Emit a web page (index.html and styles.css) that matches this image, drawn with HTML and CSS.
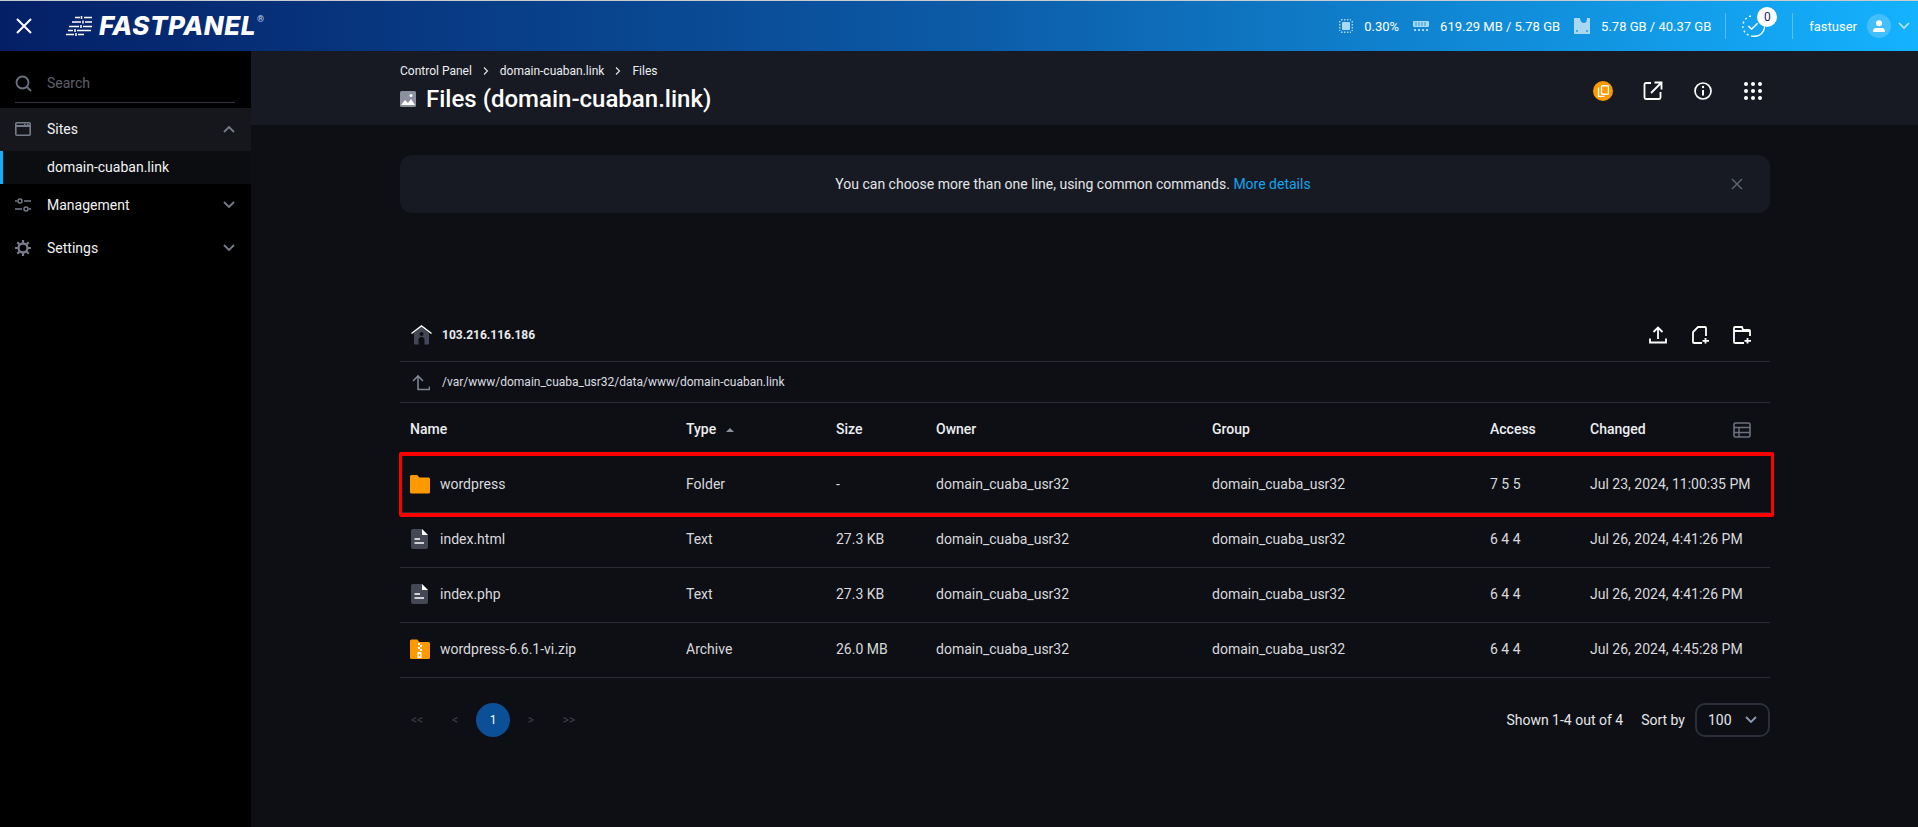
FILE: index.html
```html
<!DOCTYPE html>
<html lang="en">
<head>
    <meta charset="UTF-8">
    <meta name="viewport" content="width=device-width, initial-scale=1.0">
    <title>Files - FASTPANEL</title>
    <link rel="stylesheet" href="styles.css">
</head>
<body>
    <header class="topbar">
        <div class="topbar-left">
            <svg class="close-icon" width="16" height="16" viewBox="0 0 16 16"><path d="M1 1l14 14M15 1L1 15" stroke="#fff" stroke-width="2" fill="none"/></svg>
            <div class="logo">
                <svg width="27" height="20" viewBox="0 0 27 20"><path d="M9 1.500h5M18 1.500h8M6 6h9M19 6h7M3 10.500h10M17 10.500h9M2 14.500h5M11 14.500h14M0 18.500h8M12 18.500h6" stroke="#fff" stroke-width="1.500" fill="none"/><path d="M15.500 0v3M17 4.500v3M15 9v3M9 13v3M10 17v3" stroke="#fff" stroke-width="1.500"/></svg>
                <span class="logo-text">FASTPANEL</span><span class="logo-mark">®</span>
            </div>
        </div>
        <div class="topbar-right">
            <div class="stat">
                <svg width="14" height="14" viewBox="0 0 14 14"><rect x="3" y="3" width="8" height="8" rx="1" fill="#a9d8f5"/><path d="M0.700 2v10M13.300 2v10M2 0.700h10M2 13.300h10" stroke="#a9d8f5" stroke-width="1.400" stroke-dasharray="1.500 1.500" fill="none"/></svg>
                <span>0.30%</span>
            </div>
            <div class="stat">
                <svg width="16" height="14" viewBox="0 0 16 14"><rect x="0" y="2" width="16" height="6" rx="1" fill="#a9d8f5"/><path d="M3 3v4M6 3v4M9 3v4M12 3v4" stroke="#2a9ae0"/><path d="M1 11h14" stroke="#a9d8f5" stroke-width="2" stroke-dasharray="2 2"/></svg>
                <span>619.29 MB / 5.78 GB</span>
            </div>
            <div class="stat">
                <svg width="16" height="16" viewBox="0 0 16 16"><path d="M0 0h6c0 3 2 5 4 5s3-2 3-5h3v16H0z" fill="#a9d8f5"/><circle cx="3" cy="13" r="1" fill="#2a9ae0"/><circle cx="13" cy="13" r="1" fill="#2a9ae0"/></svg>
                <span>5.78 GB / 40.37 GB</span>
            </div>
            <div class="divider"></div>
            <div class="tasks">
                <svg width="24" height="26" viewBox="0 0 26 28"><path d="M22 6a11 11 0 0 1-9 19" stroke="#fff" stroke-width="1.600" fill="none"/><path d="M13 25A11 11 0 0 1 13 3" stroke="#fff" stroke-width="1.600" stroke-dasharray="2 3" fill="none"/><path d="M8 14l3.500 3.500L18 11" stroke="#fff" stroke-width="1.600" fill="none"/></svg>
                <span class="task-badge">0</span>
            </div>
            <div class="divider"></div>
            <div class="user">
                <span>fastuser</span>
                <span class="avatar">
                    <svg width="12" height="12" viewBox="0 0 12 12"><circle cx="6" cy="3.200" r="3" fill="#fff"/><path d="M0 12c0-2.500 1-4 3-4h6c2 0 3 1.500 3 4z" fill="#fff"/></svg>
                </span>
                <svg width="12" height="8" viewBox="0 0 12 8"><path d="M1 1l5 5 5-5" stroke="#bfe4fb" stroke-width="1.600" fill="none"/></svg>
            </div>
        </div>
    </header>

    <div class="layout">
        <aside class="sidebar">
            <div class="search-box">
                <svg width="17" height="17" viewBox="0 0 17 17"><circle cx="7.500" cy="7.500" r="6" stroke="#6c7280" stroke-width="1.800" fill="none"/><path d="M12 12l4 4" stroke="#6c7280" stroke-width="1.800"/></svg>
                <span class="search-text">Search</span>
            </div>
            <div class="nav-item nav-open">
                <svg width="16" height="14" viewBox="0 0 16 14"><rect x="0.800" y="0.800" width="14.400" height="12.400" rx="1" stroke="#767c8a" stroke-width="1.600" fill="none"/><path d="M1 4h14" stroke="#767c8a" stroke-width="2"/><path d="M9 2.500h1.500M12 2.500h1.500" stroke="#767c8a" stroke-width="1.500"/></svg>
                <span class="nav-label">Sites</span>
                <svg class="nav-arrow" width="12" height="8" viewBox="0 0 12 8"><path d="M1 7l5-5 5 5" stroke="#767c8a" stroke-width="1.800" fill="none"/></svg>
            </div>
            <div class="nav-sub">domain-cuaban.link</div>
            <div class="nav-item">
                <svg width="16" height="14" viewBox="0 0 16 14"><path d="M0 3h2M9 3h7M0 11h7M14 11h2" stroke="#767c8a" stroke-width="1.500"/><circle cx="5" cy="3" r="2" stroke="#767c8a" stroke-width="1.500" fill="none"/><circle cx="11" cy="11" r="2" stroke="#767c8a" stroke-width="1.500" fill="none"/></svg>
                <span class="nav-label">Management</span>
                <svg class="nav-arrow" width="12" height="8" viewBox="0 0 12 8"><path d="M1 1l5 5 5-5" stroke="#767c8a" stroke-width="1.800" fill="none"/></svg>
            </div>
            <div class="nav-item">
                <svg width="16" height="16" viewBox="0 0 16 16"><circle cx="8" cy="8" r="4.500" stroke="#767c8a" stroke-width="2.400" fill="none"/><path d="M8 0v3M8 13v3M0 8h3M13 8h3M2.300 2.300l2.200 2.200M11.500 11.500l2.200 2.200M13.700 2.300l-2.200 2.200M4.500 11.500l-2.200 2.200" stroke="#767c8a" stroke-width="2.200"/></svg>
                <span class="nav-label">Settings</span>
                <svg class="nav-arrow" width="12" height="8" viewBox="0 0 12 8"><path d="M1 1l5 5 5-5" stroke="#767c8a" stroke-width="1.800" fill="none"/></svg>
            </div>
        </aside>

        <main class="main">
            <div class="page-head">
                <div>
                    <div class="crumbs">
                        <span>Control Panel</span>
                        <svg width="6" height="8" viewBox="0 0 6 8"><path d="M1 0.500L4.500 4 1 7.500" stroke="#e6e8ec" stroke-width="1.100" fill="none"/></svg>
                        <span>domain-cuaban.link</span>
                        <svg width="6" height="8" viewBox="0 0 6 8"><path d="M1 0.500L4.500 4 1 7.500" stroke="#e6e8ec" stroke-width="1.100" fill="none"/></svg>
                        <span>Files</span>
                    </div>
                    <h1 class="page-title">
                        <svg width="16" height="16" viewBox="0 0 16 16"><rect width="16" height="16" rx="1.500" fill="#8a909e"/><path d="M1 14l4-5 3 3 3-4 4 6z" fill="#fff"/><circle cx="11" cy="4.500" r="1.500" fill="#fff"/></svg>
                        Files (domain-cuaban.link)
                    </h1>
                </div>
                <div class="head-actions">
                    <span class="copy-badge">
                        <svg width="12" height="12" viewBox="0 0 12 12"><rect x="4.500" y="0.700" width="7" height="8.500" rx="1" stroke="#fff" stroke-width="1.400" fill="none"/><path d="M1.500 2.500v9h6" stroke="#fff" stroke-width="1.400" fill="none"/></svg>
                    </span>
                    <svg width="20" height="20" viewBox="0 0 20 20"><path d="M8 2H3a1.500 1.500 0 0 0-1.500 1.500v13A1.500 1.500 0 0 0 3 18h13a1.500 1.500 0 0 0 1.500-1.500V11" stroke="#fff" stroke-width="1.800" fill="none"/><path d="M8 12L18 2M11.500 1.500h7v7" stroke="#fff" stroke-width="1.800" fill="none"/></svg>
                    <svg width="20" height="20" viewBox="0 0 20 20"><circle cx="10" cy="10" r="8" stroke="#fff" stroke-width="1.700" fill="none"/><path d="M10 9v5.500" stroke="#fff" stroke-width="2"/><circle cx="10" cy="6" r="1.200" fill="#fff"/></svg>
                    <svg width="20" height="20" viewBox="0 0 20 20" fill="#fff"><circle cx="3" cy="3" r="2"/><circle cx="10" cy="3" r="2"/><circle cx="17" cy="3" r="2"/><circle cx="3" cy="10" r="2"/><circle cx="10" cy="10" r="2"/><circle cx="17" cy="10" r="2"/><circle cx="3" cy="17" r="2"/><circle cx="10" cy="17" r="2"/><circle cx="17" cy="17" r="2"/></svg>
                </div>
            </div>

            <div class="content">
                <div class="notice">
                    <span>You can choose more than one line, using common commands. <a href="#">More details</a></span>
                    <svg class="notice-close" width="12" height="12" viewBox="0 0 12 12"><path d="M1 1l10 10M11 1L1 11" stroke="#5c6270" stroke-width="1.500"/></svg>
                </div>

                <div class="host-row">
                    <div class="host-name">
                        <svg width="21" height="20" viewBox="0 0 21 20"><path d="M3 8l7.500-6L18 8v10.500a1 1 0 0 1-1 1h-3.500V15a3 3 0 0 0-6 0v4.500H4a1 1 0 0 1-1-1z" fill="#434854"/><path d="M0.500 8.500L10.500 1l10 7.500" stroke="#fff" stroke-width="1.500" fill="none"/><circle cx="10.500" cy="9" r="2" fill="#0e0f14"/></svg>
                        <span>103.216.116.186</span>
                    </div>
                    <div class="host-actions">
                        <svg width="18" height="18" viewBox="0 0 18 18"><path d="M9 13V1.500M4.500 6L9 1.500 13.500 6M1 12.500v4h16v-4" stroke="#fff" stroke-width="1.800" fill="none"/></svg>
                        <svg width="18" height="18" viewBox="0 0 18 18"><path d="M11 17H3a1 1 0 0 1-1-1V6l5-5h7a1 1 0 0 1 1 1v8" stroke="#fff" stroke-width="1.800" fill="none"/><path d="M14.500 12v5.500M11.500 14.800H18" stroke="#fff" stroke-width="1.800"/></svg>
                        <svg width="18" height="18" viewBox="0 0 18 18"><path d="M11 17H2a1 1 0 0 1-1-1V2a1 1 0 0 1 1-1h7l1 3h6a1 1 0 0 1 1 1v5M1 5h16" stroke="#fff" stroke-width="1.800" fill="none"/><path d="M14.500 12v5.500M11.500 14.800H18" stroke="#fff" stroke-width="1.800"/></svg>
                    </div>
                </div>

                <div class="path-row">
                    <svg width="18" height="17" viewBox="0 0 18 17"><path d="M6 16V2M1 7l5-5 5 5M6 15.500h11.500v-3" stroke="#7d8492" stroke-width="1.600" fill="none"/></svg>
                    <span>/var/www/domain_cuaba_usr32/data/www/domain-cuaban.link</span>
                </div>

                <table class="files">
                    <colgroup>
                        <col class="col-name">
                        <col class="col-type">
                        <col class="col-size">
                        <col class="col-owner">
                        <col class="col-group">
                        <col class="col-access">
                        <col>
                    </colgroup>
                    <thead>
                        <tr>
                            <th>Name</th>
                            <th>Type <span class="sort-mark"></span></th>
                            <th>Size</th>
                            <th>Owner</th>
                            <th>Group</th>
                            <th>Access</th>
                            <th class="changed-head">
                                <span>Changed</span>
                                <svg width="18" height="16" viewBox="0 0 18 16"><rect x="1" y="1" width="16" height="14" rx="1.500" stroke="#6c7280" stroke-width="1.600" fill="none"/><path d="M1 5.500h16M1 10.500h16M6 5.500V15" stroke="#6c7280" stroke-width="1.400"/></svg>
                            </th>
                        </tr>
                    </thead>
                    <tbody>
                        <tr class="marked">
                            <td><div class="file-name">
                                <svg width="20" height="20" viewBox="0 0 20 20"><path d="M0 2.500A1.500 1.500 0 0 1 1.500 1h5.800l2 2.500h9.200A1.500 1.500 0 0 1 20 5v13a1.500 1.500 0 0 1-1.500 1.500h-17A1.500 1.500 0 0 1 0 18z" fill="#ff9900"/></svg>
                                <span>wordpress</span>
                            </div></td>
                            <td>Folder</td>
                            <td>-</td>
                            <td>domain_cuaba_usr32</td>
                            <td>domain_cuaba_usr32</td>
                            <td>7 5 5</td>
                            <td>Jul 23, 2024, 11:00:35 PM</td>
                        </tr>
                        <tr>
                            <td><div class="file-name">
                                <svg width="20" height="20" viewBox="0 0 20 20"><path d="M2.500 0H12l6 6v12a2 2 0 0 1-2 2H3a2 2 0 0 1-2-2V2a2 2 0 0 1 1.500-2z" fill="#434854"/><path d="M12 0l6 6h-6z" fill="#fff"/><path d="M4.500 10H10M4.500 14H14" stroke="#fff" stroke-width="1.600"/></svg>
                                <span>index.html</span>
                            </div></td>
                            <td>Text</td>
                            <td>27.3 KB</td>
                            <td>domain_cuaba_usr32</td>
                            <td>domain_cuaba_usr32</td>
                            <td>6 4 4</td>
                            <td>Jul 26, 2024, 4:41:26 PM</td>
                        </tr>
                        <tr>
                            <td><div class="file-name">
                                <svg width="20" height="20" viewBox="0 0 20 20"><path d="M2.500 0H12l6 6v12a2 2 0 0 1-2 2H3a2 2 0 0 1-2-2V2a2 2 0 0 1 1.500-2z" fill="#434854"/><path d="M12 0l6 6h-6z" fill="#fff"/><path d="M4.500 10H10M4.500 14H14" stroke="#fff" stroke-width="1.600"/></svg>
                                <span>index.php</span>
                            </div></td>
                            <td>Text</td>
                            <td>27.3 KB</td>
                            <td>domain_cuaba_usr32</td>
                            <td>domain_cuaba_usr32</td>
                            <td>6 4 4</td>
                            <td>Jul 26, 2024, 4:41:26 PM</td>
                        </tr>
                        <tr>
                            <td><div class="file-name">
                                <svg width="20" height="20" viewBox="0 0 20 20"><path d="M0 2A1.500 1.500 0 0 1 1.500 0.500h5.800l2 2.500h9.200A1.500 1.500 0 0 1 20 4.500v14a1.500 1.500 0 0 1-1.500 1.500h-17A1.500 1.500 0 0 1 0 18.500z" fill="#ff9900"/><path d="M8 4h2v2H8zM10 6h2v2h-2zM8 8h2v2H8zM10 10h2v2h-2zM7.500 13h4v6h-4z" fill="#fff"/><rect x="8.800" y="15" width="1.500" height="2.500" fill="#ff9900"/></svg>
                                <span>wordpress-6.6.1-vi.zip</span>
                            </div></td>
                            <td>Archive</td>
                            <td>26.0 MB</td>
                            <td>domain_cuaba_usr32</td>
                            <td>domain_cuaba_usr32</td>
                            <td>6 4 4</td>
                            <td>Jul 26, 2024, 4:45:28 PM</td>
                        </tr>
                    </tbody>
                </table>

                <div class="table-foot">
                    <div class="pager">
                        <span>&lt;&lt;</span>
                        <span>&lt;</span>
                        <span class="page-current">1</span>
                        <span>&gt;</span>
                        <span>&gt;&gt;</span>
                    </div>
                    <div class="foot-right">
                        <span class="shown">Shown 1-4 out of 4</span>
                        <span>Sort by</span>
                        <div class="per-page">
                            <span>100</span>
                            <svg width="12" height="8" viewBox="0 0 12 8"><path d="M1 1l5 5 5-5" stroke="#8f9ab8" stroke-width="1.800" fill="none"/></svg>
                        </div>
                    </div>
                </div>
            </div>
        </main>
    </div>
</body>
</html>
```

FILE: styles.css
```css
* {
    box-sizing: border-box;
}

body {
    margin: 0;
    height: 100vh;
    overflow: hidden;
    display: flex;
    flex-direction: column;
    background-color: #0e0f14;
    color: #e4e6ea;
    font-family: Roboto, Arial, sans-serif;
    font-size: 14px;
}

svg {
    display: block;
    flex-shrink: 0;
}

/* top bar */
.topbar {
    height: 51px;
    flex-shrink: 0;
    display: flex;
    justify-content: space-between;
    align-items: center;
    border-top: 1px solid #c9cbce;
    background: linear-gradient(90deg, #041f66 0%, #0c5aa6 50%, #14b2ff 100%);
    color: #fff;
}
.topbar-left {
    display: flex;
    align-items: center;
    padding-left: 16px;
}
.close-icon {
    margin-right: 34px;
}
.logo {
    display: flex;
    align-items: center;
    gap: 6px;
}
.logo-text {
    font-family: Inter, Roboto, sans-serif;
    font-size: 26px;
    font-weight: 800;
    font-style: italic;
    letter-spacing: 0.5px;
    line-height: 26px;
}
.logo-mark {
    align-self: flex-start;
    margin-left: -5px;
    font-size: 9px;
    line-height: 12px;
    color: #c5d4e8;
}
.topbar-right {
    display: flex;
    align-items: center;
    padding-right: 8px;
    font-size: 13px;
}
.stat {
    display: flex;
    align-items: center;
    gap: 11px;
    margin-right: 14px;
}
.divider {
    width: 1px;
    height: 26px;
    background-color: rgba(255, 255, 255, 0.3);
}
.tasks {
    position: relative;
    width: 66px;
    padding-left: 15px;
}
.task-badge {
    position: absolute;
    top: -6px;
    left: 31px;
    width: 20px;
    height: 20px;
    border-radius: 50%;
    background-color: #fff;
    color: #0b2a6e;
    font-size: 12px;
    line-height: 20px;
    text-align: center;
}
.user {
    display: flex;
    align-items: center;
    padding-left: 16px;
}
.avatar {
    width: 24px;
    height: 24px;
    margin: 0 7px 0 10px;
    display: flex;
    align-items: center;
    justify-content: center;
    border-radius: 50%;
    background-color: rgba(255, 255, 255, 0.2);
}

.layout {
    flex: 1;
    display: flex;
    min-height: 0;
}

/* side menu */
.sidebar {
    width: 251px;
    flex-shrink: 0;
    background-color: #000;
}
.search-box {
    height: 52px;
    padding-top: 13px;
    display: flex;
    align-items: center;
    margin-left: 15px;
    margin-right: 16px;
    border-bottom: 1px solid #33363f;
}
.search-text {
    margin-left: 15px;
    font-size: 14px;
    color: #5b606b;
}
.nav-item {
    height: 43px;
    display: flex;
    align-items: center;
    padding: 0 16px 2px 15px;
    color: #f2f3f5;
    font-size: 14px;
}
.nav-item.nav-open {
    margin-top: 5px;
    background-color: #15171c;
}
.nav-label {
    flex: 1;
    padding-left: 16px;
}
.nav-sub {
    height: 33px;
    padding-left: 44px;
    border-left: 3px solid #14aeff;
    background-color: #0c0d10;
    color: #f2f3f5;
    line-height: 33px;
}

/* page head */
.main {
    flex: 1;
    min-width: 0;
}
.page-head {
    height: 74px;
    display: flex;
    justify-content: space-between;
    align-items: flex-start;
    padding: 13px 155px 0 149px;
    background-color: #171a22;
}
.crumbs {
    display: flex;
    align-items: center;
    gap: 11px;
    font-size: 12px;
    line-height: 14px;
    color: #eceef1;
}
.page-title {
    margin: 7px 0 0;
    display: flex;
    align-items: center;
    gap: 10px;
    font-size: 24px;
    font-weight: 500;
    line-height: 28px;
    color: #fff;
}
.head-actions {
    display: flex;
    align-items: center;
    gap: 30px;
    margin-top: 17px;
}
.copy-badge {
    width: 20px;
    height: 20px;
    display: flex;
    align-items: center;
    justify-content: center;
    border-radius: 50%;
    background-color: #ff9900;
}

.content {
    width: 1370px;
    margin-left: 149px;
    padding-top: 30px;
}

.notice {
    position: relative;
    height: 58px;
    display: flex;
    align-items: center;
    justify-content: center;
    padding-right: 24px;
    border-radius: 12px;
    background-color: #171a22;
    color: #e4e6ea;
}
.notice a {
    color: #14a5ee;
    text-decoration: none;
}
.notice-close {
    position: absolute;
    right: 27px;
    top: 23px;
}

/* host and path rows */
.host-row {
    height: 53px;
    margin-top: 96px;
    display: flex;
    justify-content: space-between;
    align-items: center;
    padding: 0 19px 0 11px;
    border-bottom: 1px solid #2a2d35;
}
.host-name {
    display: flex;
    align-items: center;
    gap: 10px;
    font-size: 12px;
    font-weight: 700;
    color: #e8eaed;
}
.host-actions {
    display: flex;
    gap: 24px;
}
.path-row {
    height: 41px;
    display: flex;
    align-items: center;
    gap: 12px;
    padding-left: 12px;
    border-bottom: 1px solid #2a2d35;
    font-size: 12px;
    color: #dcdee2;
}

/* file table */
.files {
    width: 100%;
    table-layout: fixed;
    border-collapse: collapse;
}
.col-name { width: 276px; }
.col-type { width: 150px; }
.col-size { width: 100px; }
.col-owner { width: 276px; }
.col-group { width: 278px; }
.col-access { width: 100px; }

.files th {
    height: 54px;
    padding: 0 0 2px 10px;
    text-align: left;
    font-size: 14px;
    font-weight: 500;
    color: #eceef1;
}
.files td {
    height: 55px;
    padding: 0 0 2px 10px;
    border-bottom: 1px solid #2a2d35;
    color: #d8dade;
}
.files thead tr {
    border-bottom: 1px solid #0e0f14;
}
.changed-head {
    position: relative;
}
.changed-head svg {
    position: absolute;
    right: 19px;
    top: 19px;
}
.sort-mark {
    display: inline-block;
    margin: 0 0 2px 6px;
    border-left: 4px solid transparent;
    border-right: 4px solid transparent;
    border-bottom: 4px solid #8a909e;
}
.file-name {
    display: flex;
    align-items: center;
    gap: 10px;
}

/* red frame drawn on top of the first row */
.marked td:first-child {
    position: relative;
}
.marked td:first-child::after {
    content: "";
    box-sizing: border-box;
    position: absolute;
    top: -6px;
    left: -1px;
    width: 1375px;
    height: 65px;
    border: solid #f00;
    border-width: 4px 3px;
    border-radius: 2px;
    pointer-events: none;
}

/* bottom of the table */
.table-foot {
    height: 84px;
    display: flex;
    justify-content: space-between;
    align-items: center;
}
.pager {
    display: flex;
    gap: 4px;
}
.pager span {
    width: 34px;
    height: 34px;
    display: flex;
    align-items: center;
    justify-content: center;
    border-radius: 50%;
    font-size: 12px;
    color: #3f434e;
}
.pager .page-current {
    background-color: #0b4f97;
    color: #fff;
}
.foot-right {
    display: flex;
    align-items: center;
    color: #e4e6ea;
}
.shown {
    margin-right: 18px;
}
.per-page {
    width: 75px;
    height: 34px;
    margin-left: 10px;
    display: flex;
    align-items: center;
    justify-content: space-between;
    padding: 0 11px;
    border: 2px solid #2a2f3a;
    border-radius: 10px;
}
```
